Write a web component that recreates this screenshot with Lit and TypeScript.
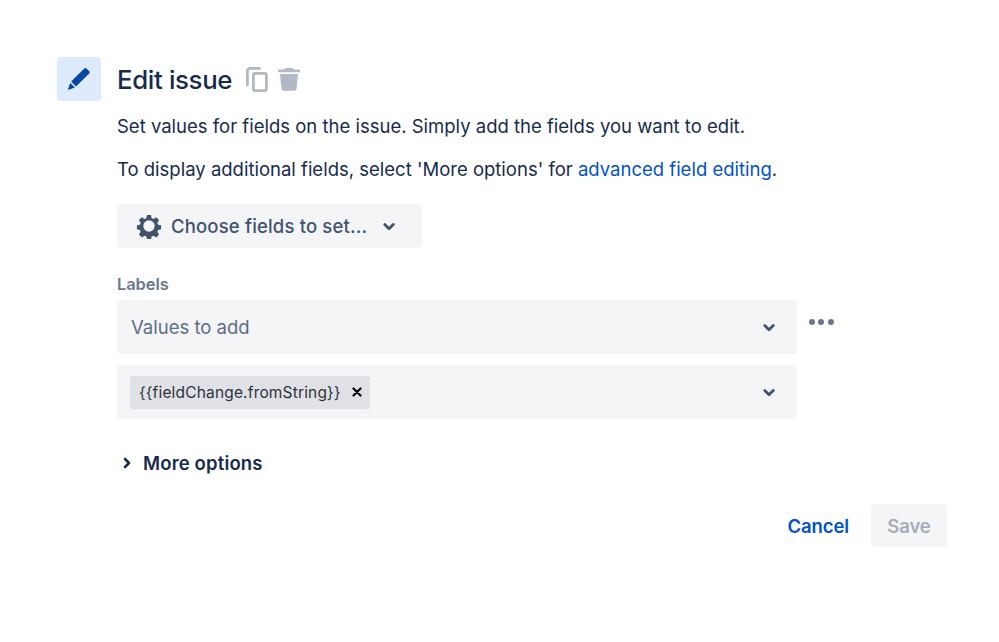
import { LitElement, html, css } from "lit";
import { customElement } from "lit/decorators.js";

const chevron = html`<svg class="chev" width="24" height="24" viewBox="3.500 3.500 17 17"><path d="M8.300 10.300a1 1 0 0 1 1.400 0L12 12.600l2.300-2.300a1 1 0 1 1 1.400 1.400l-3 3a1 1 0 0 1-1.400 0l-3-3a1 1 0 0 1 0-1.400z" fill="#42526e"/></svg>`;

@customElement("app-root")
export class AppRoot extends LitElement {
  static styles = css`
    :host {
      display: block;
      width: 999px;
      height: 642px;
      box-sizing: border-box;
      padding: 57px 52px 0 57px;
      background: #fff;
      font-family: Inter, "Liberation Sans", sans-serif;
      color: #172b4d;
      overflow: hidden;
    }
    * { box-sizing: border-box; }
    .main { display: flex; gap: 16px; }
    .tile {
      width: 44px; height: 44px; flex: none;
      background: #deebff; border-radius: 4px;
      display: flex; align-items: center; justify-content: center;
    }
    .body { flex: 1; min-width: 0; }
    .head { display: flex; align-items: center; height: 44px; }
    h1 { margin: 0; padding-top: 1px; font-size: 25.800px; font-weight: 500; letter-spacing: -0.35px; color: #172b4d; line-height: 44px; }
    .head-icons { display: flex; align-items: center; gap: 10px; margin-left: 14px; }
    p { margin: 0; font-size: 18.500px; line-height: 27px; color: #172b4d; }
    p.a { margin-top: 12px; }
    p.b { margin-top: 16px; }
    a { color: #0052cc; text-decoration: none; }
    .choose {
      margin-top: 21px; width: 305px; height: 44px;
      background: #f4f5f7; border-radius: 4px;
      display: flex; align-items: center; padding-left: 19px;
      color: #42526e; font-size: 18.500px; font-weight: 500; letter-spacing: 0.16px;
    }
    .choose span { margin-left: 9px; }
    .choose .chev { margin-left: 10px; }
    .label { margin-top: 26px; font-size: 16.400px; font-weight: 600; line-height: 20px; color: #6b778c; letter-spacing: -0.05px; }
    .row { display: flex; margin-top: 6px; }
    .select {
      width: 680px; height: 54px; background: #f4f5f7; border-radius: 4px;
      display: flex; align-items: center; justify-content: space-between;
      padding: 0 16px 0 14px; font-size: 18.500px; color: #5e6c84;
    }
    .dots { display: flex; gap: 3.500px; margin: 19px 0 0 11.500px; height: 8px; align-items: flex-start; }
    .dots i { width: 6px; height: 6px; border-radius: 50%; background: #6b778c; display: block; }
    .select.two { margin-top: 11px; padding-left: 13px; }
    .tag {
      height: 33px; background: #dfe1e6; border-radius: 3px;
      display: flex; align-items: center; padding: 1px 0 0 9px;
      font-size: 15.500px; color: #2f3338; letter-spacing: 0.17px; width: 240px;
    }
    .tag svg { margin-left: 11px; margin-top: -1px; }
    .more {
      display: flex; align-items: center; margin-top: 32px; height: 24px;
      font-size: 18.500px; font-weight: 600; letter-spacing: 0.15px; color: #172b4d;
    }
    .more svg { margin-right: 10px; }
    .actions { display: flex; justify-content: flex-end; align-items: center; margin: 29px 0 0; gap: 22px; }
    .cancel { color: #0052cc; font-size: 18.500px; font-weight: 600; letter-spacing: -0.1px; }
    .save {
      width: 76px; height: 43px; background: #f4f5f7; border-radius: 4px;
      display: flex; align-items: center; justify-content: center;
      color: #a5adba; font-size: 18.500px; font-weight: 600; letter-spacing: -0.1px;
    }
  `;

  render() {
    return html`
      <div class="main">
        <div class="tile">
          <svg width="26" height="26" viewBox="0 0 26 26">
            <path d="M18.300 2.600a1.600 1.600 0 0 1 2.200 0l2.700 2.600a1.600 1.600 0 0 1 0 2.200L10 20.400l-4.900-4.900z" fill="#0747a6"/>
            <path d="M4.200 16.900l4.700 4.700-6 2.200c-.5.200-1-.3-.8-.8z" fill="#0747a6"/>
          </svg>
        </div>
        <div class="body">
          <div class="head">
            <h1>Edit issue</h1>
            <div class="head-icons">
              <svg width="22" height="25" viewBox="0 0 22 25" fill="none" stroke="#b3b9c4" stroke-width="2.800">
                <rect x="7.400" y="6.400" width="13" height="17.200" rx="1.500"/>
                <path d="M13.500 1.400H4a2.600 2.600 0 0 0-2.600 2.600v14" stroke-linecap="round"/>
              </svg>
              <svg width="22" height="23" viewBox="0 0 22 23" fill="#b3b9c4">
                <path d="M8 0h6a1.400 1.400 0 0 1 1.400 1.400H21a1 1 0 0 1 1 1v1.800H0V2.400a1 1 0 0 1 1-1h5.600A1.400 1.400 0 0 1 8 0z"/>
                <path d="M2 6h18l-1.500 15a2 2 0 0 1-2 1.800H5.500a2 2 0 0 1-2-1.800z"/>
              </svg>
            </div>
          </div>
          <p class="a">Set values for fields on the issue. Simply add the fields you want to edit.</p>
          <p class="b">To display additional fields, select 'More options' for <a>advanced field editing</a>.</p>
          <div class="choose">
            <svg width="26" height="26" viewBox="0 0 26 26">
              <path fill="#42526e" fill-rule="evenodd" d="M10.900 1.500h4.200l.7 3.300 1.900.8 2.900-1.800 3 3-1.800 2.900.8 1.900 3.100.7v4.200l-3.100.7-.8 1.900 1.800 2.900-3 3-2.900-1.800-1.900.8-.7 3.100h-4.200l-.7-3.100-1.900-.8-2.900 1.800-3-3 1.800-2.900-.8-1.900-3.100-.7v-4.200l3.100-.7.8-1.900-1.800-2.900 3-3 2.900 1.800 1.900-.8zM13 7a6 6 0 1 0 0 12 6 6 0 0 0 0-12z" transform="translate(.65 .65) scale(.95)"/>
            </svg>
            <span>Choose fields to set...</span>
            ${chevron}
          </div>
          <div class="label">Labels</div>
          <div class="row">
            <div class="select">Values to add ${chevron}</div>
            <div class="dots"><i></i><i></i><i></i></div>
          </div>
          <div class="select two">
            <div class="tag">{{fieldChange.fromString}}
              <svg width="10" height="10" viewBox="0 0 10 10"><path d="M1.500 1.500l7 7M8.500 1.500l-7 7" stroke="#000" stroke-width="2.200" stroke-linecap="round"/></svg>
            </div>
            ${chevron}
          </div>
          <div class="more">
            <svg width="16" height="24" viewBox="0 0 16 24"><path d="M8 8l4 4-4 4" fill="none" stroke="#172b4d" stroke-width="2.600" stroke-linecap="round" stroke-linejoin="round"/></svg>
            More options
          </div>
          <div class="actions">
            <span class="cancel">Cancel</span>
            <div class="save">Save</div>
          </div>
        </div>
      </div>
    `;
  }
}
